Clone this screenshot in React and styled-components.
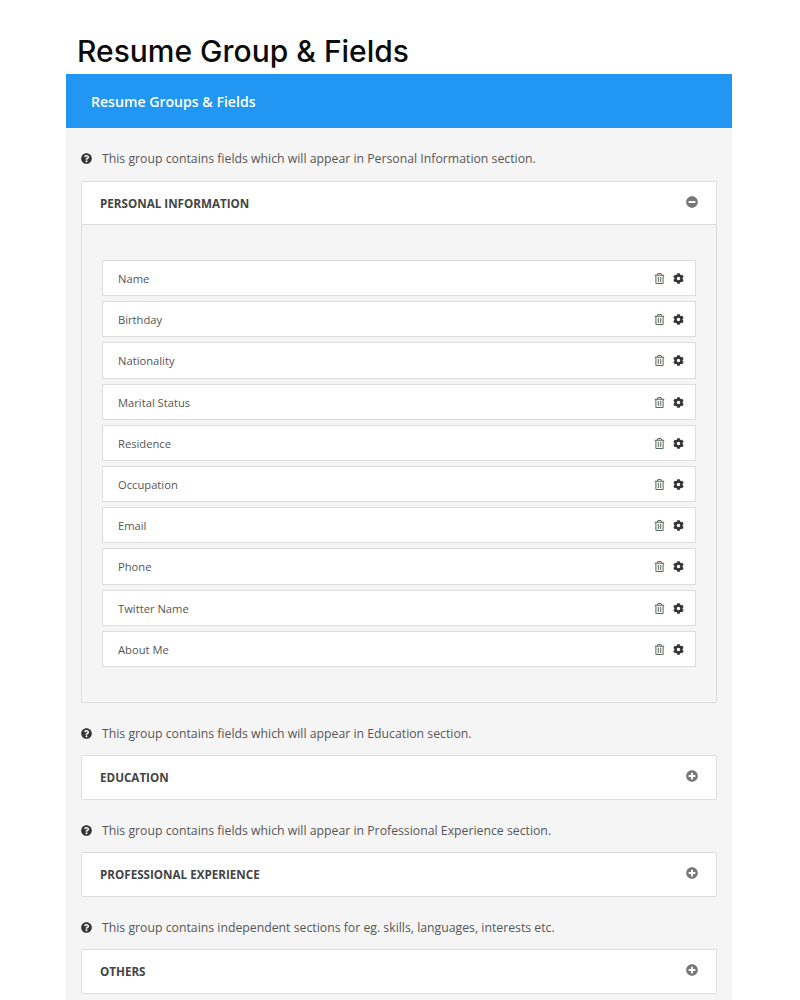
import React from "react";
import styled, {createGlobalStyle} from "styled-components";
import {FaQuestionCircle, FaMinusCircle, FaPlusCircle, FaCog, FaRegTrashAlt} from "react-icons/fa";

const GlobalStyle = createGlobalStyle`
  body {
    margin: 0;
    background: #fff;
    font-family: "Open Sans", "Noto Sans", sans-serif;
  }
`

const Page = styled.div`
  width: 666px;
  margin-left: 66px;
  height: 1000px;
  overflow: hidden;
`

const Title = styled.h1`
  margin: 0;
  padding-left: 11px;
  height: 74px;
  box-sizing: border-box;
  padding-top: 31px;
  font-family: Inter, sans-serif;
  font-size: 30px;
  line-height: 40px;
  font-weight: 500;
  color: #0b0b0b;
`

const Panel = styled.section`
  background: #f5f5f5;
  min-height: 926px;
`

const PanelHeader = styled.div`
  height: 54px;
  padding-left: 25px;
  display: flex;
  align-items: center;
  background: #2196f3;
  color: #fff;
  font-size: 14.1px;
  font-weight: 600;
`

const PanelBody = styled.div`
  padding: 19px 15px 0;
`

const Note = styled.p`
  margin: 0;
  height: 22px;
  display: flex;
  align-items: center;
  gap: 10px;
  font-size: 12.28px;
  color: #555;

  svg {
    font-size: 11px;
    color: #333;
  }
`

const Group = styled.div`
  margin: ${props => props.$first ? "12px 0 20px" : "10px 0 20px"};
  border: 1px solid #ddd;
  border-radius: 2px;
`

const GroupHead = styled.div`
  height: ${props => props.$open ? "42px" : "43px"};
  padding: 0 18px;
  display: flex;
  align-items: center;
  justify-content: space-between;
  background: #fff;
  font-size: 11.65px;
  font-weight: 700;
  color: #444;

  svg {
    font-size: 12px;
    color: #777;
    margin-bottom: 2px;
  }
`

const GroupContent = styled.div`
  border-top: 1px solid #ddd;
  padding: 35px 20px 35px;
  display: flex;
  flex-direction: column;
  gap: 5px;
`

const Field = styled.div`
  height: 34.2px;
  padding: 0 11px 0 15px;
  display: flex;
  align-items: center;
  justify-content: space-between;
  background: #fff;
  border: 1px solid #ddd;
  font-size: 11.2px;
  color: #555;
`

const FieldName = styled.span`
  padding-top: 1px;
`

const Actions = styled.div`
  display: flex;
  align-items: center;
  gap: 8px;
  padding-top: 1px;
`

const Trash = styled(FaRegTrashAlt)`
  font-size: 11px;
  color: #5b6b5f;
`

const Gear = styled(FaCog)`
  font-size: 11px;
  color: #333;
`

const fields = ["Name", "Birthday", "Nationality", "Marital Status", "Residence", "Occupation", "Email", "Phone", "Twitter Name", "About Me"]

const App = () => {
    return (
        <Page>
            <GlobalStyle/>
            <Title>Resume Group &amp; Fields</Title>
            <Panel>
                <PanelHeader>Resume Groups &amp; Fields</PanelHeader>
                <PanelBody>
                    <Note><FaQuestionCircle/>This group contains fields which will appear in Personal Information section.</Note>
                    <Group $first>
                        <GroupHead $open>PERSONAL INFORMATION<FaMinusCircle/></GroupHead>
                        <GroupContent>
                            {fields.map(name => (
                                <Field key={name}>
                                    <FieldName>{name}</FieldName>
                                    <Actions><Trash/><Gear/></Actions>
                                </Field>
                            ))}
                        </GroupContent>
                    </Group>
                    <Note><FaQuestionCircle/>This group contains fields which will appear in Education section.</Note>
                    <Group>
                        <GroupHead>EDUCATION<FaPlusCircle/></GroupHead>
                    </Group>
                    <Note><FaQuestionCircle/>This group contains fields which will appear in Professional Experience section.</Note>
                    <Group>
                        <GroupHead>PROFESSIONAL EXPERIENCE<FaPlusCircle/></GroupHead>
                    </Group>
                    <Note><FaQuestionCircle/>This group contains independent sections for eg. skills, languages, interests etc.</Note>
                    <Group>
                        <GroupHead>OTHERS<FaPlusCircle/></GroupHead>
                    </Group>
                </PanelBody>
            </Panel>
        </Page>
    )
}

export default App
